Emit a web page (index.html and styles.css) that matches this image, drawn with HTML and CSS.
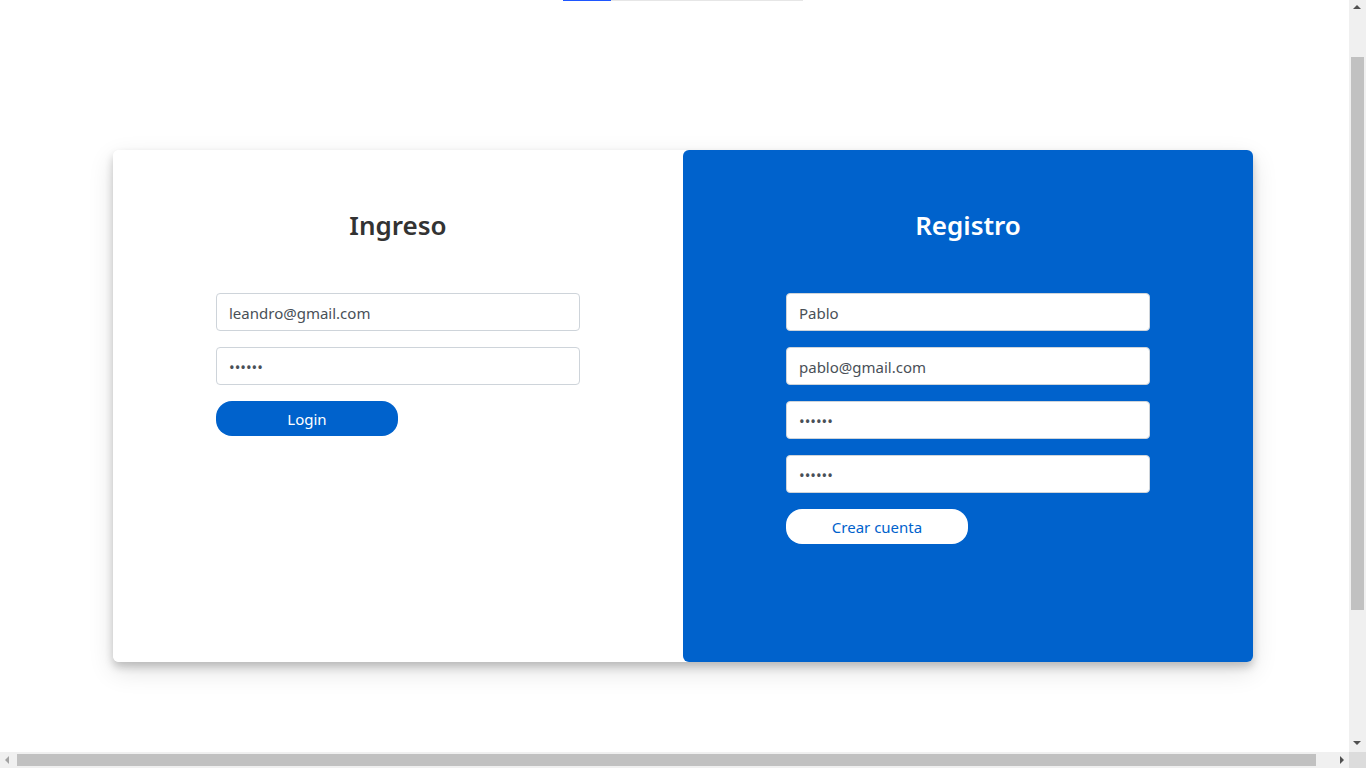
FILE: index.html
```html
<!DOCTYPE html>
<html lang="es">
<head>
<meta charset="utf-8">
<title>Login</title>
<link rel="stylesheet" href="styles.css">
</head>
<body>
<div class="page">
  <div class="progress"><div class="progress-fill"></div></div>
  <div class="login-container">
    <div class="panel panel-login">
      <h3 class="title">Ingreso</h3>
      <form class="form">
        <input class="field" type="text" value="leandro@gmail.com">
        <input class="field" type="password" value="123456">
        <button class="btn btn-blue" type="button">Login</button>
      </form>
    </div>
    <div class="panel panel-register">
      <h3 class="title title-light">Registro</h3>
      <form class="form">
        <input class="field" type="text" value="Pablo">
        <input class="field" type="text" value="pablo@gmail.com">
        <input class="field" type="password" value="123456">
        <input class="field" type="password" value="123456">
        <button class="btn btn-white" type="button">Crear cuenta</button>
      </form>
    </div>
  </div>
</div>
<div class="vscroll">
  <div class="arrow arrow-up"></div>
  <div class="vtrack"><div class="vthumb"></div></div>
  <div class="arrow arrow-down"></div>
</div>
<div class="hscroll">
  <div class="arrow arrow-left"></div>
  <div class="htrack"><div class="hthumb"></div></div>
  <div class="arrow arrow-right"></div>
  <div class="corner"></div>
</div>
</body>
</html>
```
FILE: styles.css
```css
* { box-sizing: border-box; }
html, body { margin: 0; padding: 0; height: 100%; overflow: hidden; background: #fff; }
body { font-family: "Noto Sans", "Open Sans", sans-serif; color: #212529; }

.page { display: flex; flex-direction: column; align-items: center; }

.progress { width: 240px; height: 1px; background: #e6e6e6; display: flex; }
.progress-fill { width: 48px; background: #1e56ff; }

.login-container {
  margin-top: 149px;
  width: 1140px;
  display: flex;
  border-radius: 6px;
  box-shadow: 0 5px 8px 0 rgba(0,0,0,0.2), 0 9px 26px 0 rgba(0,0,0,0.12);
}
.panel {
  flex: 1;
  height: 512px;
  padding-top: 58px;
  border-radius: 6px;
  display: flex;
  flex-direction: column;
  align-items: center;
}
.panel-login { background: #fff; }
.panel-register { background: #0062cc; }

.title {
  margin: 0;
  font-size: 26px;
  line-height: 34px;
  font-weight: 600;
  color: #333;
  text-align: center;
}
.title-light { color: #fff; }

.form {
  width: 364px;
  margin-top: 51px;
  display: flex;
  flex-direction: column;
  gap: 16px;
}
.field {
  width: 100%;
  height: 38px;
  padding: 7px 12px 5px;
  font-family: inherit;
  font-size: 15px;
  color: #495057;
  background: #fff;
  border: 1px solid #ced4da;
  border-radius: 4px;
  outline: none;
}
.btn {
  width: 182px;
  height: 35px;
  border: none;
  border-radius: 16px;
  font-family: inherit;
  font-size: 15px;
  cursor: pointer;
}
.btn-blue { background: #0062cc; color: #fff; }
.btn-white { background: #fff; color: #0062cc; }

/* fake scrollbars */
.vscroll {
  position: fixed; top: 0; right: 0; width: 17px; height: 752px;
  background: #f0f0f0; display: flex; flex-direction: column; align-items: center;
}
.vtrack { flex: 1; width: 100%; padding: 0 2px; }
.vthumb { margin-top: 40px; height: 553px; background: #c1c1c1; }
.hscroll {
  position: fixed; left: 0; bottom: 0; width: 1366px; height: 16px;
  background: #f0f0f0; display: flex; align-items: center;
}
.htrack { flex: 1; height: 100%; padding: 2px 0; }
.hthumb { width: 1299px; height: 100%; background: #c1c1c1; }
.corner { width: 17px; height: 16px; background: #dcdcdc; }
.arrow { width: 17px; height: 17px; flex: none; position: relative; }
.arrow::after { content: ""; position: absolute; width: 0; height: 0; }
.arrow-up::after { left: 4px; top: 5px; border-left: 4px solid transparent; border-right: 4px solid transparent; border-bottom: 4px solid #505050; }
.arrow-down::after { left: 4px; top: 6px; border-left: 4px solid transparent; border-right: 4px solid transparent; border-top: 4px solid #505050; }
.arrow-left { height: 16px; }
.arrow-left::after { left: 5px; top: 4px; border-top: 4px solid transparent; border-bottom: 4px solid transparent; border-right: 4px solid #a3a3a3; }
.arrow-right { height: 16px; }
.arrow-right::after { left: 8px; top: 4px; border-top: 4px solid transparent; border-bottom: 4px solid transparent; border-left: 4px solid #505050; }
```
